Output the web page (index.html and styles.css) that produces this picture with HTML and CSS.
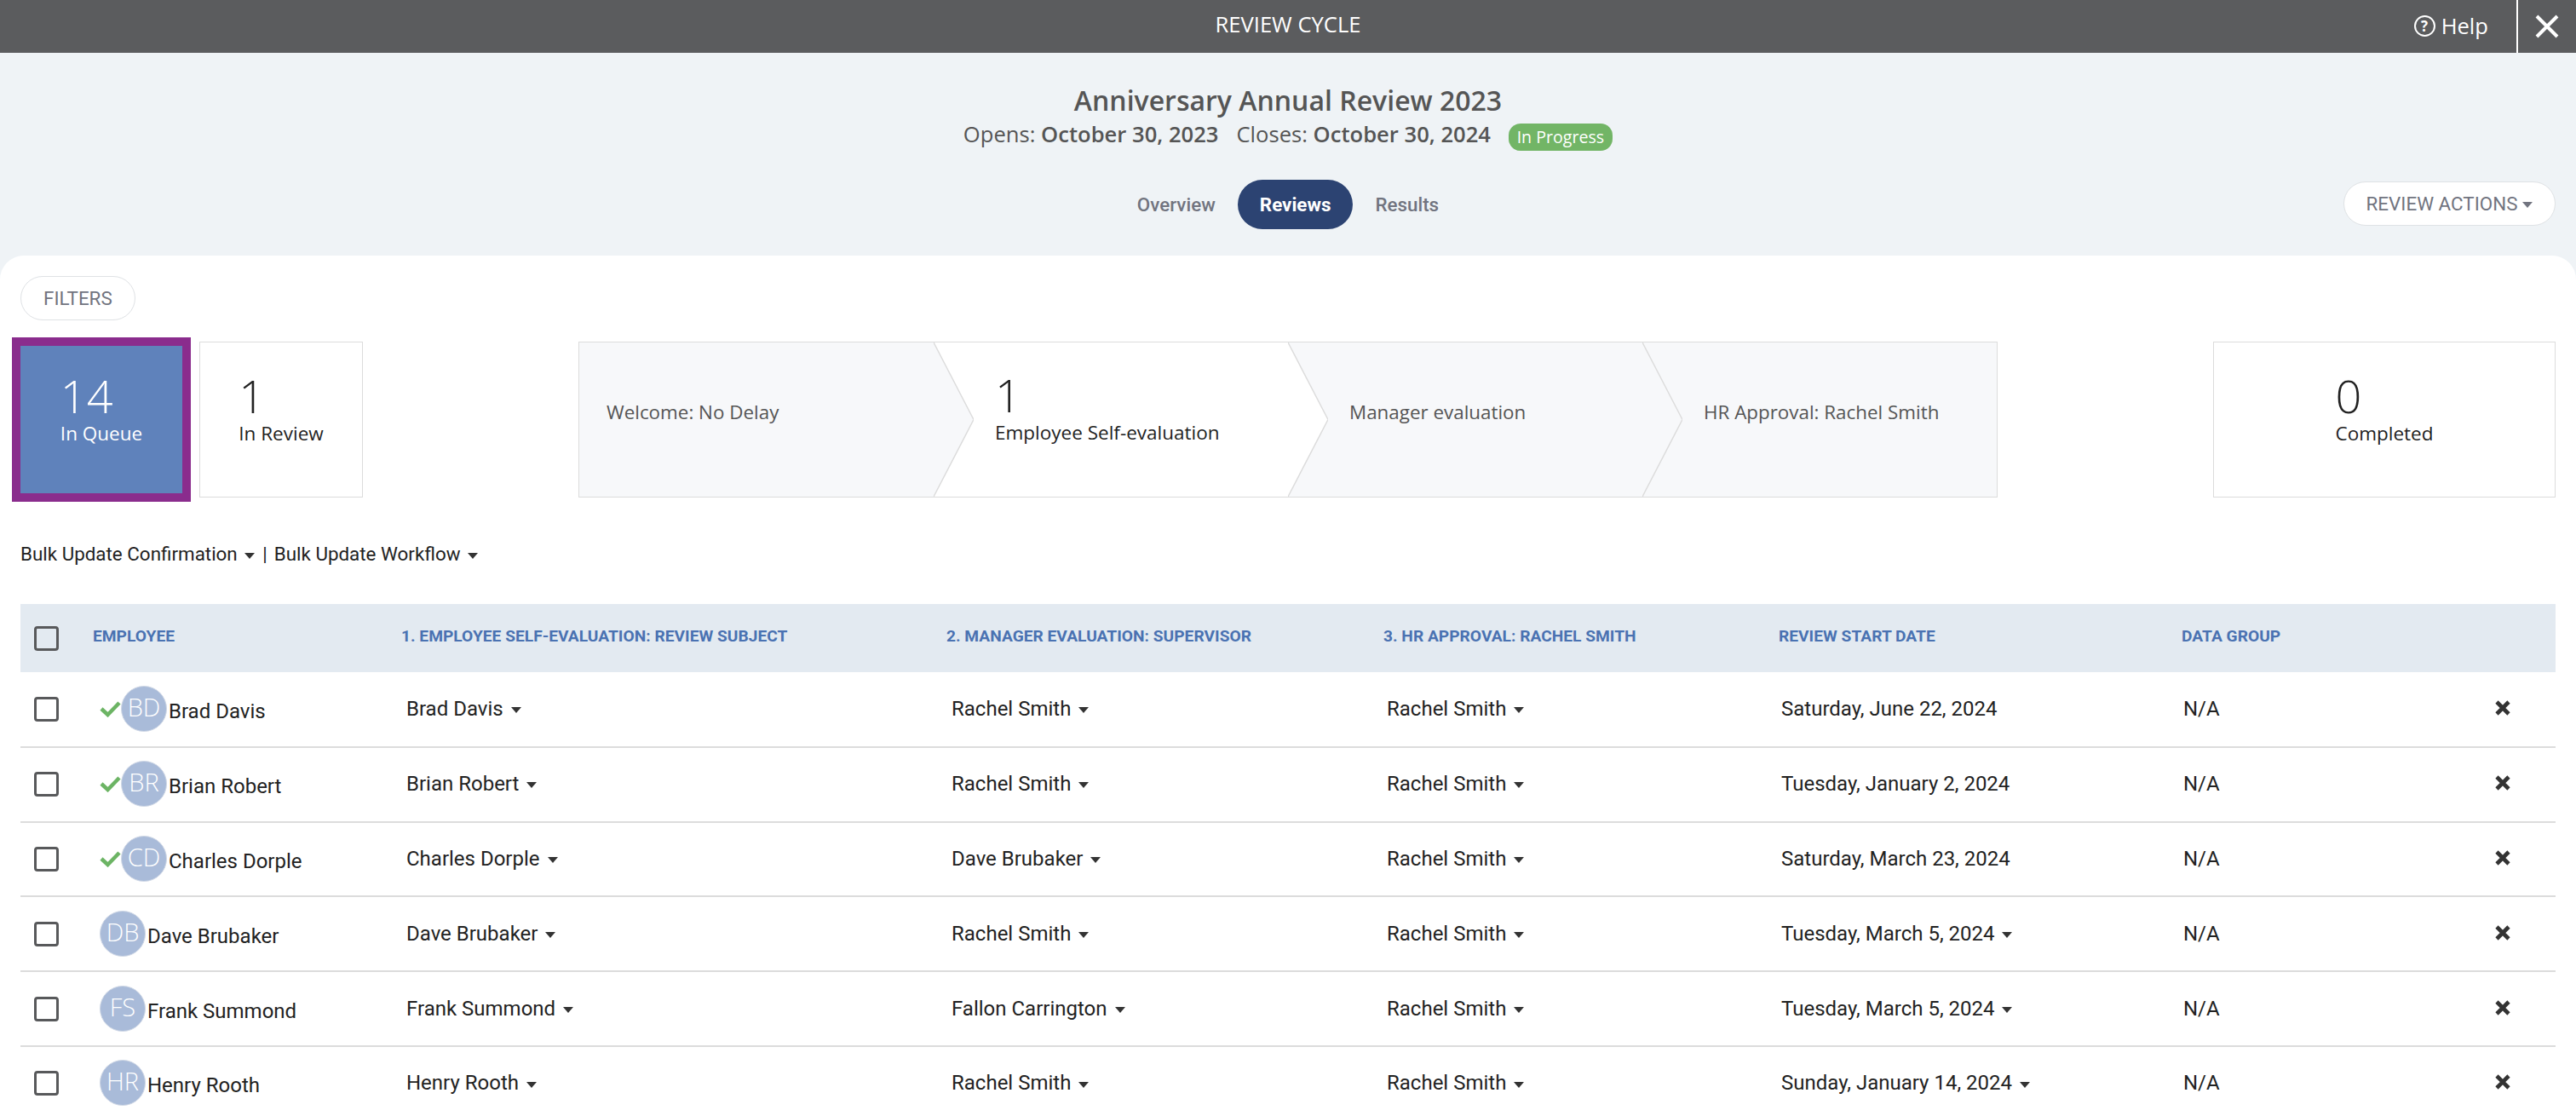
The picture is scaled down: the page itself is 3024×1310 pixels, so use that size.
FILE: index.html
```html
<!DOCTYPE html>
<html>
<head>
  <link rel="stylesheet" href="styles.css">
</head>
<body>
  <div class="topbar">
    <div class="topbar-title">REVIEW CYCLE</div>
    <div class="topbar-right">
      <div class="help"><span class="help-icon">?</span>Help</div>
      <div class="close-btn">
        <svg width="28" height="28" viewBox="0 0 28 28"><path d="M2 2 L26 26 M26 2 L2 26" stroke="#fff" stroke-width="4" fill="none"/></svg>
      </div>
    </div>
  </div>

  <div class="header">
    <div class="title">Anniversary Annual Review 2023</div>
    <div class="dates">
      Opens: <b>October 30, 2023</b><span class="closes">Closes: <b>October 30, 2024</b></span>
      <span class="badge">In Progress</span>
    </div>
    <div class="nav-row">
      <div></div>
      <div class="tabs">
        <div class="tab">Overview</div>
        <div class="tab active">Reviews</div>
        <div class="tab">Results</div>
      </div>
      <div class="actions-wrap">
        <button class="pill-btn actions">REVIEW ACTIONS <i class="caret small"></i></button>
      </div>
    </div>
  </div>

  <div class="panel">
    <button class="pill-btn filters">FILTERS</button>

    <div class="stats">
      <div class="stat-group">
        <div class="stat selected">
          <div class="stat-inner"><div class="num">14</div><div class="lbl">In Queue</div></div>
        </div>
        <div class="stat review">
          <div class="stat-inner"><div class="num">1</div><div class="lbl">In Review</div></div>
        </div>
      </div>

      <div class="steps">
        <div class="step">
          <span class="step-text">Welcome: No Delay</span>
          <svg class="arrow" viewBox="0 0 47 183" preserveAspectRatio="none"><polygon points="0,0 47,91.5 0,183" fill="#f7f8fa"/><polyline points="0,0 47,91.5 0,183" fill="none" stroke="#dcdcdc" stroke-width="1.5"/></svg>
        </div>
        <div class="step current">
          <div class="step-inner"><div class="num">1</div><div class="lbl">Employee Self-evaluation</div></div>
          <svg class="arrow" viewBox="0 0 47 183" preserveAspectRatio="none"><polygon points="0,0 47,91.5 0,183" fill="#fff"/><polyline points="0,0 47,91.5 0,183" fill="none" stroke="#dcdcdc" stroke-width="1.5"/></svg>
        </div>
        <div class="step">
          <span class="step-text">Manager evaluation</span>
          <svg class="arrow" viewBox="0 0 47 183" preserveAspectRatio="none"><polygon points="0,0 47,91.5 0,183" fill="#f7f8fa"/><polyline points="0,0 47,91.5 0,183" fill="none" stroke="#dcdcdc" stroke-width="1.5"/></svg>
        </div>
        <div class="step">
          <span class="step-text">HR Approval: Rachel Smith</span>
        </div>
      </div>

      <div class="stat completed">
        <div class="stat-inner"><div class="num">0</div><div class="lbl">Completed</div></div>
      </div>
    </div>

    <div class="bulk">
      Bulk Update Confirmation <i class="caret"></i><span class="bulk-sep">|</span>Bulk Update Workflow <i class="caret"></i>
    </div>

    <table class="reviews">
      <colgroup>
        <col class="c-check"><col class="c-emp"><col class="c-self"><col class="c-mgr"><col class="c-hr"><col class="c-date"><col class="c-group"><col class="c-del">
      </colgroup>
      <thead>
        <tr>
          <th><span class="box"></span></th>
          <th>EMPLOYEE</th>
          <th>1. EMPLOYEE SELF-EVALUATION: REVIEW SUBJECT</th>
          <th>2. MANAGER EVALUATION: SUPERVISOR</th>
          <th>3. HR APPROVAL: RACHEL SMITH</th>
          <th>REVIEW START DATE</th>
          <th>DATA GROUP</th>
          <th></th>
        </tr>
      </thead>
      <tbody id="rows"></tbody>
    </table>
  </div>

  <script src="rows.js"></script>
</body>
</html>
```

FILE: rows.js
```js
const people = [
  { init: 'BD', name: 'Brad Davis', mgr: 'Rachel Smith', date: 'Saturday, June 22, 2024', done: true, dateMenu: false },
  { init: 'BR', name: 'Brian Robert', mgr: 'Rachel Smith', date: 'Tuesday, January 2, 2024', done: true, dateMenu: false },
  { init: 'CD', name: 'Charles Dorple', mgr: 'Dave Brubaker', date: 'Saturday, March 23, 2024', done: true, dateMenu: false },
  { init: 'DB', name: 'Dave Brubaker', mgr: 'Rachel Smith', date: 'Tuesday, March 5, 2024', done: false, dateMenu: true },
  { init: 'FS', name: 'Frank Summond', mgr: 'Fallon Carrington', date: 'Tuesday, March 5, 2024', done: false, dateMenu: true },
  { init: 'HR', name: 'Henry Rooth', mgr: 'Rachel Smith', date: 'Sunday, January 14, 2024', done: false, dateMenu: true }
];

const check = '<svg class="tick" width="26" height="20" viewBox="0 0 26 20"><path d="M2 10 L9.5 17 L23 3" stroke="#6cb464" stroke-width="4.5" fill="none"/></svg>';
const del = '<svg width="18" height="18" viewBox="0 0 18 18"><path d="M2 2 L16 16 M16 2 L2 16" stroke="#333" stroke-width="4.6" fill="none"/></svg>';

document.getElementById('rows').innerHTML = people.map(function(p) {
  return '<tr>' +
    '<td><span class="box"></span></td>' +
    '<td><div class="emp">' + (p.done ? check : '') +
      '<span class="avatar">' + p.init + '</span><span class="emp-name">' + p.name + '</span></div></td>' +
    '<td class="pad">' + p.name + ' <i class="caret"></i></td>' +
    '<td class="pad">' + p.mgr + ' <i class="caret"></i></td>' +
    '<td class="pad hr">Rachel Smith <i class="caret"></i></td>' +
    '<td class="pad date">' + p.date + (p.dateMenu ? ' <i class="caret"></i>' : '') + '</td>' +
    '<td class="na">N/A</td>' +
    '<td class="del">' + del + '</td>' +
    '</tr>';
}).join('');
```

FILE: styles.css
```css
html, body {
  height: 100%;
  overflow: hidden;
}

body {
  margin: 0;
  background: #eff3f6;
  font-family: "Open Sans", sans-serif;
  color: #555;
}

.topbar {
  height: 62px;
  background: #5b5c5e;
  color: #fff;
  display: flex;
  align-items: center;
  justify-content: center;
  position: relative;
  font-size: 25.6px;
}

.topbar-title {
  margin-top: -6px;
}

.topbar-right {
  position: absolute;
  right: 0;
  top: 0;
  height: 62px;
  display: flex;
  align-items: center;
}

.help {
  display: flex;
  align-items: center;
  gap: 7px;
  font-size: 25.6px;
  margin-right: 33px;
  margin-top: -2px;
}

.help-icon {
  width: 21px;
  height: 21px;
  border: 2.5px solid #fff;
  border-radius: 50%;
  font-size: 17px;
  font-weight: 700;
  line-height: 21px;
  text-align: center;
}

.close-btn {
  width: 70px;
  height: 62px;
  border-left: 2px solid #fff;
  box-sizing: border-box;
  display: flex;
  align-items: center;
  padding-left: 20px;
}

.header {
  height: 238px;
  text-align: center;
}

.title {
  padding-top: 35px;
  font-size: 32px;
  font-weight: 600;
  line-height: 42px;
}

.dates {
  font-size: 25.6px;
  line-height: 40px;
  margin-top: -1px;
}

.dates b {
  font-weight: 600;
}

.closes {
  margin-left: 21px;
}

.badge {
  display: inline-block;
  height: 32px;
  line-height: 32px;
  padding: 0 10px;
  margin-left: 14px;
  margin-top: 2px;
  border-radius: 14px;
  background: #72b566;
  color: #fff;
  font-size: 19.6px;
  vertical-align: middle;
}

.nav-row {
  display: grid;
  grid-template-columns: 1fr auto 1fr;
  align-items: center;
  margin-top: 33px;
  padding-right: 24px;
  padding-left: 24px;
}

.tabs {
  display: flex;
  align-items: center;
  gap: 26px;
}

.tab {
  font-family: Roboto, sans-serif;
  font-size: 22.4px;
  font-weight: 500;
  color: #71747f;
}

.tab.active {
  height: 58px;
  line-height: 58px;
  padding: 0 26px;
  border-radius: 29px;
  background: #2c4372;
  color: #fff;
  font-weight: 700;
}

.actions-wrap {
  text-align: right;
}

.pill-btn {
  background: #fff;
  border: 1.5px solid #dfe2e5;
  border-radius: 26px;
  height: 52px;
  padding: 0 26px;
  font-family: Roboto, sans-serif;
  font-size: 22.4px;
  color: #71747f;
}

.actions {
  margin-top: -3px;
}

.panel {
  background: #fff;
  border-radius: 28px 28px 0 0;
  padding-top: 24px;
  height: 1010px;
  color: #222;
}

.filters {
  display: block;
  margin-left: 24px;
}

.stats {
  display: flex;
  justify-content: space-between;
  align-items: stretch;
  height: 183px;
  margin-top: 25px;
  padding: 0 24px;
}

.stat-group {
  display: flex;
  gap: 20px;
}

.stat {
  width: 192px;
  box-sizing: border-box;
  border: 1.5px solid #dcdcdc;
  display: flex;
  align-items: center;
  justify-content: center;
}

.stat.selected {
  width: 190px;
  height: 173px;
  margin: 5px 0;
  background: #5f82bb;
  border: none;
  outline: 10px solid #8a2c8d;
  color: #fff;
}

.stat.completed {
  width: 402px;
}

.stat-inner {
  margin-bottom: 28px;
}

.step-inner {
  margin-bottom: 12px;
}

.num {
  font-size: 54px;
  font-weight: 300;
  line-height: 60px;
}

.lbl {
  font-size: 22.5px;
  line-height: 30px;
}

.steps {
  display: grid;
  grid-template-columns: repeat(4, minmax(0, 1fr));
  width: 1666px;
  box-sizing: border-box;
  border: 1.5px solid #dcdcdc;
  background: #f7f8fa;
}

.step {
  box-sizing: border-box;
  position: relative;
  display: flex;
  align-items: center;
  padding-left: 72px;
  padding-bottom: 18px;
  font-size: 22.4px;
  color: #555;
}

.step:first-child {
  padding-left: 32px;
  z-index: 3;
}

.step:nth-child(2) {
  z-index: 2;
}

.step:nth-child(3) {
  z-index: 1;
}

.step.current {
  background: #fff;
  color: #222;
}

.arrow {
  position: absolute;
  top: 0;
  left: 100%;
  width: 47px;
  height: 100%;
}

.bulk {
  height: 32px;
  line-height: 32px;
  margin: 50px 0 43px 24px;
  font-family: Roboto, sans-serif;
  font-size: 22.4px;
  color: #222;
}

.bulk-sep {
  margin: 0 8px 0 9px;
}

.caret {
  display: inline-block;
  width: 0;
  height: 0;
  margin-left: 3px;
  border-top: 7px solid #333;
  border-left: 6px solid transparent;
  border-right: 6px solid transparent;
  vertical-align: middle;
}

.caret.small {
  margin-left: 0;
  border-top-color: #71747f;
}

.reviews {
  width: 2976px;
  margin-left: 24px;
  table-layout: fixed;
  border-collapse: collapse;
  font-family: Roboto, sans-serif;
  font-size: 24px;
  color: #222;
}

.c-check { width: 78px; }
.c-emp { width: 362px; }
.c-self { width: 640px; }
.c-mgr { width: 513px; }
.c-hr { width: 464px; }
.c-date { width: 473px; }
.c-group { width: 367px; }

.reviews th {
  height: 80px;
  background: #e3eaf1;
  color: #4a72b2;
  font-size: 19.2px;
  font-weight: 700;
  text-align: left;
  padding: 0 0 6px 7px;
  box-sizing: border-box;
}

.reviews th:first-child,
.reviews td:first-child {
  padding: 0 0 0 16px;
}

.reviews td {
  height: 87.8px;
  box-sizing: border-box;
  border-bottom: 2px solid #dcdcdc;
  padding: 0 0 1px 13px;
}

.reviews td.hr {
  padding-left: 11px;
}

.reviews td.date {
  padding-left: 10px;
}

.reviews td.na {
  padding-left: 9px;
}

.reviews td.del {
  padding-left: 0;
  padding-right: 53px;
  text-align: right;
}

.box {
  display: block;
  width: 29px;
  height: 29px;
  box-sizing: border-box;
  border: 3.5px solid #58595b;
  border-radius: 4px;
}

.emp {
  display: flex;
  align-items: center;
  padding-left: 2px;
}

.tick {
  flex-shrink: 0;
  margin-right: -1px;
}

.avatar {
  width: 54px;
  height: 54px;
  flex-shrink: 0;
  box-sizing: border-box;
  border-radius: 50%;
  border: 1px solid #d0d8e6;
  background: #a9bbd9;
  color: #fff;
  font-family: "Open Sans", sans-serif;
  font-size: 29px;
  font-weight: 300;
  line-height: 48px;
  text-align: center;
  margin-right: 2px;
}

.emp-name {
  padding-top: 6px;
}
```
